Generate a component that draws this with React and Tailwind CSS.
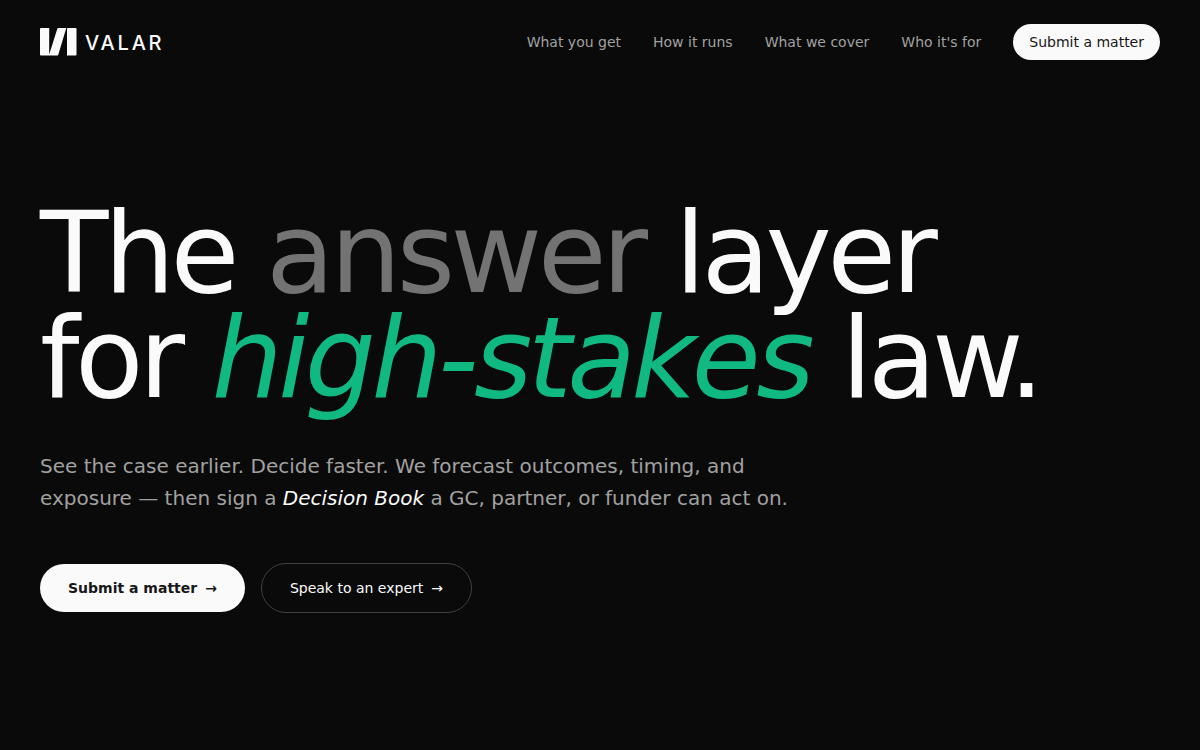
const links = ["What you get", "How it runs", "What we cover", "Who it's for"];

function Logo() {
  return (
    <a href="#" aria-label="Valar" className="flex items-center gap-2 text-[#fafafa]">
      <svg width="37" height="28" viewBox="0 0 37 28" fill="currentColor" aria-hidden="true">
        <path d="M1 0H9.2V26.5L17.2 1Q17.5 0 18.5 0H26.3L18.2 27Q18 27.6 17 27.6H1Q0 27.6 0 26.6V1Q0 0 1 0ZM28 0H35.5Q36.5 0 36.5 1V26.6Q36.5 27.6 35.5 27.6H27V1Q27 0 28 0Z" />
      </svg>
      <span className="pt-0.5 font-['Inter',sans-serif] text-xl leading-7 font-medium tracking-[0.14em]">VALAR</span>
    </a>
  );
}

export default function App() {
  return (
    <div className="min-h-screen bg-[#0a0a0a] font-['DejaVu_Sans',sans-serif] text-[#fafafa]">
      <header className="flex items-center justify-between px-10 py-6">
        <Logo />
        <nav className="flex items-center gap-8 text-sm text-[#a1a1a1]">
          {links.map((label) => (
            <a key={label} href="#">{label}</a>
          ))}
          <a href="#" className="rounded-full bg-[#fafafa] px-4 py-2 text-[#171717]">Submit a matter</a>
        </nav>
      </header>
      <main className="px-10 pt-[117px]">
        <h1 className="text-[112px] leading-[105px] tracking-[-0.04em]">
          The <span className="text-[#737373]">answer</span> layer
          <br />
          for <em className="text-[#10b981]">high-stakes</em> law.
        </h1>
        <p className="mt-[39px] max-w-3xl text-xl leading-8 text-[#a1a1a1]">
          See the case earlier. Decide faster. We forecast outcomes, timing, and exposure — then sign a{" "}
          <em className="text-[#fafafa]">Decision Book</em> a GC, partner, or funder can act on.
        </p>
        <div className="mt-[49px] flex flex-wrap items-center gap-4 text-sm">
          <a href="#" className="flex gap-2 rounded-full bg-[#fafafa] px-7 py-3.5 font-bold text-[#171717]">
            Submit a matter <span>→</span>
          </a>
          <a href="#" className="flex gap-2 rounded-full border border-[#404040] px-7 py-3.5">
            Speak to an expert <span>→</span>
          </a>
        </div>
      </main>
    </div>
  );
}
